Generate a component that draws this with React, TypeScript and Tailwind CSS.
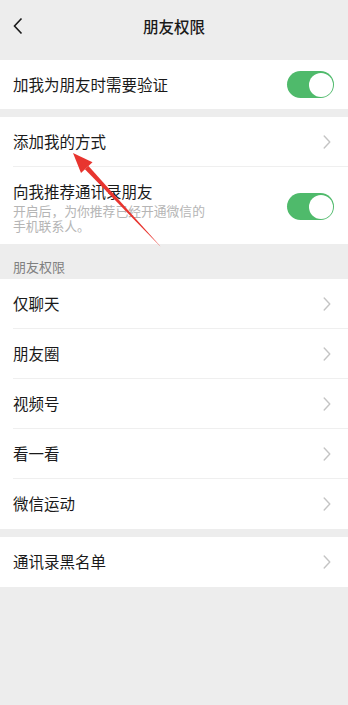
import React from "react";

const font = { fontFamily: '"Noto Sans CJK SC", "Noto Sans", sans-serif' };

function Chevron() {
  return (
    <svg width="8" height="14" viewBox="0 0 8 14" className="shrink-0">
      <path d="M1.2 1 L6.8 7 L1.2 13" fill="none" stroke="#c4c4c4" strokeWidth="1.4" strokeLinecap="round" strokeLinejoin="round" />
    </svg>
  );
}

function Toggle() {
  return (
    <div className="w-[47px] h-[27px] rounded-full bg-[#4fba6b] relative shrink-0">
      <div className="absolute right-[1.5px] top-[1.5px] w-[24px] h-[24px] rounded-full bg-white" />
    </div>
  );
}

function Row({ label, last }: { label: string; last?: boolean }) {
  return (
    <div className="h-[50px] pl-[13px] flex relative">
      <div className="flex-1 flex items-center justify-between pr-[17px]">
        <span className="text-[15.5px] text-[#1a1a1a]">{label}</span>
        <Chevron />
      </div>
      {!last && <div className="absolute left-[13px] right-0 bottom-0 h-px bg-[#efefef]" />}
    </div>
  );
}

export default function App() {
  return (
    <div className="w-[348px] h-[705px] bg-[#ededed] relative overflow-hidden" style={font}>
      {/* Header */}
      <div className="h-[60px] flex items-center justify-center relative">
        <svg width="12" height="18" viewBox="0 0 12 18" className="absolute left-[12px] top-[17px]">
          <path d="M9.5 1.5 L2.5 9 L9.5 16.5" fill="none" stroke="#1a1a1a" strokeWidth="1.6" strokeLinejoin="miter" />
        </svg>
        <span className="text-[15.5px] font-medium text-[#1a1a1a] -mt-[6px]">朋友权限</span>
      </div>

      {/* 验证 */}
      <div className="bg-white h-[49px] pl-[13px] pr-[14px] flex items-center justify-between">
        <span className="text-[15.5px] text-[#1a1a1a]">加我为朋友时需要验证</span>
        <Toggle />
      </div>

      <div className="h-[8px]" />

      <div className="bg-white">
        <Row label="添加我的方式" />
        <div className="h-[77px] pl-[13px] pr-[14px] flex items-start justify-between">
          <div className="pt-[14px]">
            <div className="text-[15.5px] text-[#1a1a1a] leading-[20px]">向我推荐通讯录朋友</div>
            <div className="text-[12.8px] text-[#b5b5b5] leading-[15px] mt-[1.5px]">
              开启后，为你推荐已经开通微信的
              <br />
              手机联系人。
            </div>
          </div>
          <div className="pt-[26px]">
            <Toggle />
          </div>
        </div>
      </div>

      {/* Section header */}
      <div className="h-[35px] pl-[13px] flex items-center pt-[10px]">
        <span className="text-[13px] text-[#808080]">朋友权限</span>
      </div>

      <div className="bg-white">
        <Row label="仅聊天" />
        <Row label="朋友圈" />
        <Row label="视频号" />
        <Row label="看一看" />
        <Row label="微信运动" last />
      </div>

      <div className="h-[8px]" />

      <div className="bg-white">
        <Row label="通讯录黑名单" last />
      </div>

      {/* Red annotation arrow */}
      <svg className="absolute left-0 top-0 pointer-events-none" width="348" height="705" viewBox="0 0 348 705">
        <polygon points="160.6,246.5 159.4,245.5 84.9,169.3 88.5,165.9" fill="#e8352f" />
        <polygon points="73,153 92.5,162.2 81,173" fill="#e8352f" />
      </svg>
    </div>
  );
}
